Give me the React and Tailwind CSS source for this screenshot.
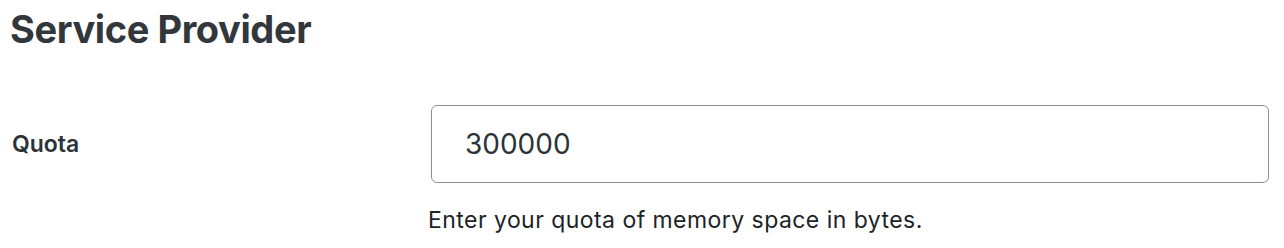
export default function App() {
  return (
    <div className="w-[1284px] h-[248px] bg-white overflow-hidden font-['Inter',sans-serif]">
      <h1 className="pl-[10px] pt-[6px] text-[38px] leading-[46px] font-bold tracking-[-0.4px] text-[#32373c]">
        Service Provider
      </h1>
      <div className="flex items-start pt-[53px] pr-[15px]">
        <label className="w-[431px] h-[78px] shrink-0 pl-[12px] flex items-center text-[23px] font-semibold text-[#2c3338]">
          Quota
        </label>
        <div className="flex-1">
          <input
            type="text"
            defaultValue="300000"
            className="w-full h-[78px] border-[1.5px] border-[#8c8f94] rounded-[6px] pl-[33px] text-[28px] text-[#2c3338] outline-none"
          />
          <p className="mt-[23px] -ml-[3px] text-[23px] leading-[28px] tracking-[0.45px] text-[#1d2327]">
            Enter your quota of memory space in bytes.
          </p>
        </div>
      </div>
    </div>
  );
}
